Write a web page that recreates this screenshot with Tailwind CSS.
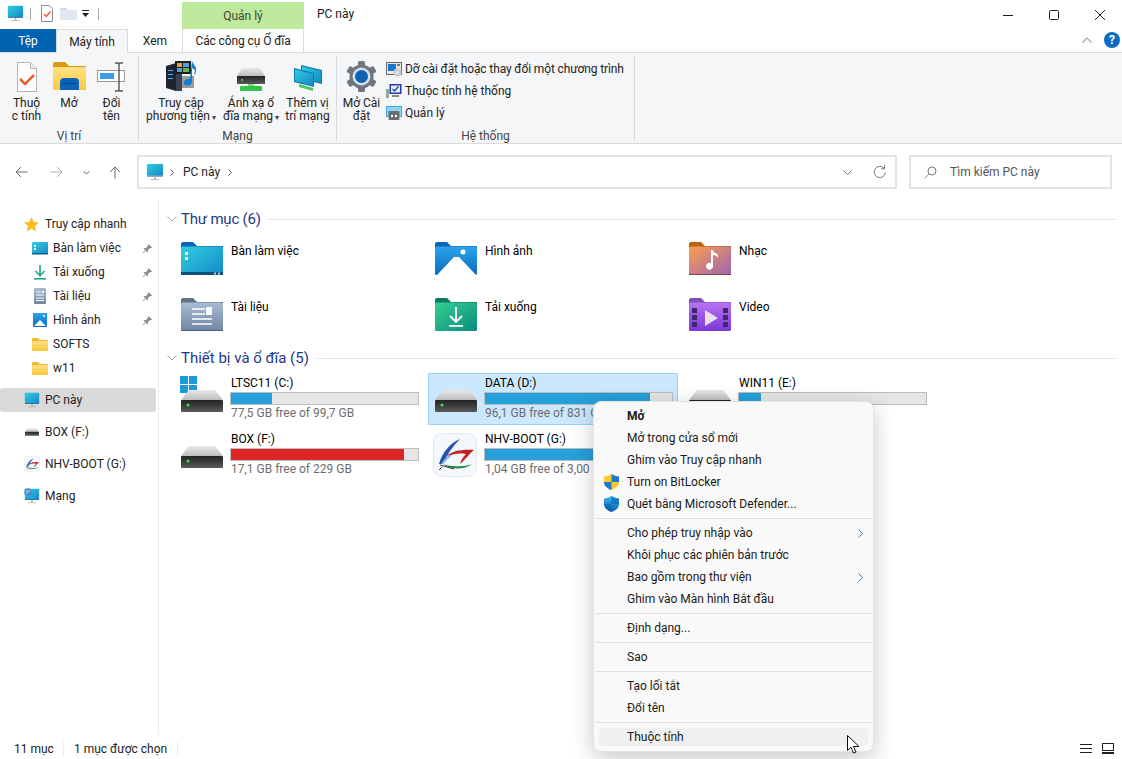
<!DOCTYPE html>
<html lang="vi">
  <head>
    <meta charset="UTF-8" />
    <title>PC này</title>
    <script src="https://cdn.jsdelivr.net/npm/@tailwindcss/browser@4"></script>
  </head>
  <body class="w-[1122px] h-[759px] overflow-hidden bg-white font-['Roboto','Noto_Sans',sans-serif] text-[12px] text-black">
    <!-- shared icons -->
    <svg class="absolute w-0 h-0 overflow-hidden" width="0" height="0">
      <defs>
        <linearGradient id="gDesk" x1="0" y1="0" x2="1" y2="1"><stop offset="0" stop-color="#2fd0df"/><stop offset="1" stop-color="#1488c6"/></linearGradient>
        <linearGradient id="gPic" x1="0" y1="0" x2="0" y2="1"><stop offset="0" stop-color="#2aa5ea"/><stop offset="1" stop-color="#0c6abd"/></linearGradient>
        <linearGradient id="gDoc" x1="0" y1="0" x2="0" y2="1"><stop offset="0" stop-color="#a9bcd3"/><stop offset="1" stop-color="#6f86a2"/></linearGradient>
        <linearGradient id="gDl" x1="0" y1="0" x2="1" y2="1"><stop offset="0" stop-color="#35d090"/><stop offset="1" stop-color="#0c8a80"/></linearGradient>
        <linearGradient id="gMusic" x1="0" y1="0" x2="1" y2="1"><stop offset="0" stop-color="#ff9d50"/><stop offset="1" stop-color="#9a65b2"/></linearGradient>
        <linearGradient id="gVideo" x1="0" y1="0" x2="0" y2="1"><stop offset="0" stop-color="#b873f2"/><stop offset="1" stop-color="#7a38d6"/></linearGradient>
        <linearGradient id="gDriveTop" x1="0" y1="0" x2="0" y2="1"><stop offset="0" stop-color="#e8e8e8"/><stop offset="1" stop-color="#bdbdbd"/></linearGradient>
        <linearGradient id="gDriveBody" x1="0" y1="0" x2="0" y2="1"><stop offset="0" stop-color="#232323"/><stop offset="1" stop-color="#5a5a5a"/></linearGradient>
        <linearGradient id="gYellow" x1="0" y1="0" x2="0" y2="1"><stop offset="0" stop-color="#ffe083"/><stop offset="1" stop-color="#fcc93f"/></linearGradient>
        <linearGradient id="gShield" x1="0" y1="0" x2="0" y2="1"><stop offset="0" stop-color="#35b4ee"/><stop offset="1" stop-color="#0a5fb4"/></linearGradient>

        <symbol id="monitor" viewBox="0 0 20 20">
          <rect x="1" y="1" width="18" height="13" rx="1" fill="url(#gDesk)"/>
          <rect x="1" y="14" width="18" height="1" fill="#0f5f8c"/>
          <rect x="9" y="15" width="2" height="3" fill="#a9b4bc"/>
          <rect x="5" y="18" width="10" height="1" fill="#a9b4bc"/>
        </symbol>
        <symbol id="drive" viewBox="0 0 42 22">
          <path d="M8 0h26l8 10H0z" fill="url(#gDriveTop)"/>
          <rect x="0" y="10" width="42" height="12" rx="1" fill="url(#gDriveBody)"/>
          <circle cx="7" cy="15" r="1.6" fill="#3fe04f"/>
        </symbol>
        <symbol id="nhv" viewBox="0 0 44 44">
          <rect x="0.5" y="0.5" width="43" height="43" rx="8" fill="#f3f8fc" stroke="#e4e8ec"/>
          <path d="M6 31C9 20 17 10 27 6c-6 6-13 15-17 25z" fill="#2a4fb0"/>
          <path d="M8 31C12 24 20 18 28 16c-7 4-13 9-18 15z" fill="#7ab3e8"/>
          <path d="M13 23c7-5 16-7 28-6-5 4-9 10-14 14 1-4 3-7 6-10-7-1-13 0-20 2z" fill="#c8201f"/>
          <path d="M10 31c8 3 22 3 29 0-7 6-22 6-29 0z" fill="#2b8f4a"/>
          <path d="M7 32l14 4M9 34l-3 3" stroke="#333" stroke-width="1" fill="none"/>
        </symbol>
        <symbol id="pin" viewBox="0 0 12 12">
          <path d="M7 1l4 4-1 .6-1.800.2L6.400 8l.1 1.600-.8.6L1.800 6.300l.6-.8L4 5.600 6.200 3.800l.2-1.800z" fill="#8b8b8b"/>
          <path d="M3.500 8.500L1 11" stroke="#8b8b8b" stroke-width="1"/>
        </symbol>
        <symbol id="folderY" viewBox="0 0 16 14">
          <path d="M0 2a1 1 0 011-1h5l2 2h7a1 1 0 011 1v9a1 1 0 01-1 1H1a1 1 0 01-1-1z" fill="#f5b72d"/>
          <rect x="0" y="4" width="16" height="10" rx="1" fill="url(#gYellow)"/>
        </symbol>
      </defs>
    </svg>

    <div class="flex flex-col h-full">
      <!-- title bar -->
      <div class="flex h-[29px] shrink-0">
        <div class="flex items-center w-[182px] pl-[7px] pb-[2px]">
          <svg class="w-[17px] h-[17px]"><use href="#monitor"/></svg>
          <div class="w-px h-[12px] bg-[#a8a8a8] ml-[6px]"></div>
          <svg class="w-[14px] h-[17px] ml-[9px]" viewBox="0 0 14 17">
            <path d="M1.500.500h8l3 3v13h-11z" fill="#fff" stroke="#8a8a8a"/>
            <path d="M4 9l2.300 2.400L10.500 6.500" fill="none" stroke="#e8602c" stroke-width="1.500"/>
          </svg>
          <svg class="w-[17px] h-[13px] ml-[6px]" viewBox="0 0 17 13">
            <path d="M0 1h6l2 2h9v10H0z" fill="#cfdbe8"/><rect y="3" width="17" height="10" fill="#dfe7f0"/>
          </svg>
          <svg class="w-[8px] h-[8px] ml-[5px]" viewBox="0 0 8 8">
            <rect y="0" width="7" height="1" fill="#222"/><path d="M0 3h7L3.500 7z" fill="#222"/>
          </svg>
          <div class="w-px h-[12px] bg-[#a8a8a8] ml-[8px]"></div>
        </div>
        <div class="w-[122px] mt-[2px] bg-[#bfe99c] flex items-center justify-center pt-[1px] text-[#3c4a36]">Quản lý</div>
        <div class="ml-[13px] pt-[5px] h-[29px] text-[#1a1a1a]">PC này</div>
        <div class="ml-auto flex h-full">
          <div class="w-[46px] flex items-center justify-center"><svg class="w-[10px] h-[10px]" viewBox="0 0 10 10"><rect y="5" width="10" height="1" fill="#222"/></svg></div>
          <div class="w-[46px] flex items-center justify-center"><svg class="w-[10px] h-[10px]" viewBox="0 0 10 10"><rect x=".5" y=".5" width="9" height="9" rx="1" fill="none" stroke="#222"/></svg></div>
          <div class="w-[45px] flex items-center justify-center"><svg class="w-[10px] h-[10px]" viewBox="0 0 10 10"><path d="M0 0l10 10M10 0L0 10" stroke="#222"/></svg></div>
        </div>
      </div>

      <!-- tabs -->
      <div class="flex h-[24px] shrink-0 border-b border-[#dadbdc] relative">
        <div class="w-[56px] h-[23px] bg-[#0063b1] text-white flex items-center justify-center">Tệp</div>
        <div class="w-[72px] h-[24px] bg-[#f5f6f7] border-x border-t border-[#dadbdc] flex items-center justify-center text-[#222]">Máy tính</div>
        <div class="w-[54px] flex items-center justify-center text-[#222]">Xem</div>
        <div class="w-[122px] border-x border-[#dadbdc] flex items-center justify-center text-[#222] tracking-[-0.1px]">Các công cụ Ổ đĩa</div>
        <div class="ml-auto flex items-center pr-[2px] pb-[2px]">
          <svg class="w-[10px] h-[6px] mr-[12px]" viewBox="0 0 10 6"><path d="M.5 5.500L5 1l4.500 4.500" fill="none" stroke="#a4a4a4" stroke-width="1.200"/></svg>
          <div class="w-[16px] h-[16px] rounded-full bg-[#0a6cc4] text-white font-bold text-[12px] leading-[16px] text-center">?</div>
        </div>
      </div>

      <!-- ribbon -->
      <div class="flex h-[91px] shrink-0 bg-[#f5f6f7] border-b border-[#dadbdc] text-[#222]">
        <!-- Vi tri -->
        <div class="w-[139px] my-[2px] border-r border-[#dadbdc] flex flex-col">
          <div class="flex flex-1 pl-[6px]">
            <div class="w-[41px] flex flex-col items-center">
              <svg class="w-[24px] h-[30px] mt-[7px]" viewBox="0 0 24 30">
                <path d="M2.500.500h13l6 6v23h-19z" fill="#fff" stroke="#b5b5b5"/>
                <path d="M15.500.500v6h6" fill="#eee" stroke="#b5b5b5"/>
                <path d="M5 17l5 5 9-9" fill="none" stroke="#e8602c" stroke-width="2.500"/>
              </svg>
              <div class="text-center leading-[13px] mt-[5px]">Thuộ<br />c tính</div>
            </div>
            <div class="w-[44px] flex flex-col items-center">
              <svg class="w-[33px] h-[28px] mt-[7px]" viewBox="0 0 33 28">
                <path d="M0 2a2 2 0 012-2h10l4 4h17v6H0z" fill="#d99a14"/>
                <rect y="5" width="33" height="23" fill="url(#gYellow)"/>
                <path d="M7 28v-8a4 4 0 014-4h11a4 4 0 014 4v8z" fill="#0b63b8"/>
                <rect x="10" y="21" width="13" height="1" fill="#073f78"/>
              </svg>
              <div class="text-center leading-[13px] mt-[7px]">Mở</div>
            </div>
            <div class="w-[41px] flex flex-col items-center">
              <svg class="w-[29px] h-[30px] mt-[7px]" viewBox="0 0 29 30">
                <rect x=".5" y="8.500" width="27" height="11" fill="#fff" stroke="#9a9a9a"/>
                <rect x="3" y="11" width="14" height="6" fill="#3a9be6"/>
                <path d="M18 1h3l1 1 1-1h3M22 2v26M18 29h3l1-1 1 1h3" fill="none" stroke="#555" stroke-width="1.400"/>
              </svg>
              <div class="text-center leading-[13px] mt-[5px]">Đổi<br />tên</div>
            </div>
          </div>
          <div class="h-[14px] leading-[18px] text-center text-[#444]">Vị trí</div>
        </div>
        <!-- Mang -->
        <div class="w-[198px] my-[2px] border-r border-[#dadbdc] flex flex-col">
          <div class="flex flex-1">
            <div class="w-[84px] flex flex-col items-center">
              <svg class="w-[32px] h-[32px] mt-[5px]" viewBox="0 0 32 32">
                <path d="M1 6l10-3v28l-10-3z" fill="#1d2530"/>
                <path d="M11 3l6 2v26h-6z" fill="#3a4350"/>
                <rect x="3" y="10" width="5" height="1" fill="#4ab2ff"/><rect x="3" y="14" width="5" height="1" fill="#4ab2ff"/><rect x="3" y="18" width="5" height="1" fill="#4ab2ff"/>
                <path d="M10 1h16v13H10z" fill="#1c1c1c"/>
                <rect x="12" y="3" width="5" height="4" fill="#e3a23a"/><rect x="18" y="3" width="6" height="4" fill="#4aa3df"/>
                <rect x="12" y="8" width="5" height="4" fill="#4aa3df"/><rect x="18" y="8" width="6" height="4" fill="#6cb24a"/>
                <path d="M17 16h12v12H17z" fill="#9a9a9a"/>
                <path d="M27 1c1 4 5 5 4 10-.5 3-1 3-2 4l1-5-3-2v14c0 3-6 5-8 2-1-3 2-5 5-5h1z" fill="#0d7fd6"/>
              </svg>
              <div class="text-center leading-[13px] mt-[5px]">Truy cập<br />phương tiện<span class="text-[8px] ml-[2px] text-[#444]">▾</span></div>
            </div>
            <div class="w-[56px] flex flex-col items-center">
              <svg class="w-[28px] h-[24px] mt-[13px]" viewBox="0 0 28 24">
                <path d="M5 0h18l5 8H0z" fill="url(#gDriveTop)"/>
                <rect y="8" width="28" height="8" fill="url(#gDriveBody)"/>
                <circle cx="5" cy="12" r="1" fill="#3fe04f"/>
                <rect x="3" y="18" width="22" height="5" rx="1" fill="#32c24a"/>
                <rect x="11" y="16" width="6" height="2" fill="#7adf7f"/>
              </svg>
              <div class="text-center leading-[13px] mt-[5px] whitespace-nowrap">Ánh xạ ổ<br />đĩa mạng<span class="text-[8px] ml-[2px] text-[#444]">▾</span></div>
            </div>
            <div class="w-[57px] flex flex-col items-center">
              <svg class="w-[28px] h-[27px] mt-[10px]" viewBox="0 0 28 27">
                <path d="M7 0l21 5v14L7 14z" fill="#1477b8"/>
                <path d="M8 1.500l19 4.500v11.500L8 13z" fill="url(#gDesk)"/>
                <path d="M0 3l20 5v14L0 17z" fill="#1477b8"/>
                <path d="M1 4.500l18 4.500v11.500L1 16z" fill="url(#gDesk)"/>
                <path d="M5 19l14 4v3l-14-4z" fill="#46c95a"/>
              </svg>
              <div class="text-center leading-[13px] mt-[5px] whitespace-nowrap">Thêm vị<br />trí mạng</div>
            </div>
          </div>
          <div class="h-[14px] leading-[18px] text-center text-[#444]">Mạng</div>
        </div>
        <!-- He thong -->
        <div class="w-[298px] my-[2px] border-r border-[#dadbdc] flex flex-col">
          <div class="flex flex-1">
            <div class="w-[49px] flex flex-col items-center">
              <svg class="w-[33px] h-[33px] mt-[5px]" viewBox="0 0 33 33">
                <g fill="#6f7680">
                  <circle cx="16.500" cy="16.500" r="12"/>
                  <rect x="13" y="1" width="7" height="31" rx="1.500"/>
                  <rect x="13" y="1" width="7" height="31" rx="1.500" transform="rotate(60 16.500 16.500)"/>
                  <rect x="13" y="1" width="7" height="31" rx="1.500" transform="rotate(120 16.500 16.500)"/>
                </g>
                <circle cx="16.500" cy="16.500" r="9" fill="#d7dfe8"/>
                <circle cx="16.500" cy="16.500" r="6.500" fill="#0d62b5"/>
              </svg>
              <div class="text-center leading-[13px] mt-[4px]">Mở Cài<br />đặt</div>
            </div>
            <div class="flex flex-col pt-[3px]">
              <div class="h-[22px] flex items-center">
                <svg class="w-[16px] h-[16px]" viewBox="0 0 16 16">
                  <rect x=".5" y="1.500" width="15" height="12" fill="#e8e8e8" stroke="#666"/>
                  <rect x="2" y="3" width="8" height="7" fill="#1a78c8"/>
                  <rect x="11" y="3" width="3" height="2" fill="#777"/>
                  <circle cx="11.500" cy="11.500" r="4" fill="#c9ccd0"/><circle cx="11.500" cy="11.500" r="1" fill="#fff"/>
                </svg>
                <span class="ml-[3px] whitespace-nowrap tracking-[-0.12px]">Dỡ cài đặt hoặc thay đổi một chương trình</span>
              </div>
              <div class="h-[22px] flex items-center">
                <svg class="w-[16px] h-[16px]" viewBox="0 0 16 16">
                  <rect x="0" y="6" width="3" height="9" fill="#8fae8f"/>
                  <rect x="3.500" y="1" width="12" height="10" fill="#1d3fae"/>
                  <rect x="5" y="2.500" width="9" height="7" fill="#e8f0ff"/>
                  <path d="M6.500 6l2 2 4-4.500" stroke="#1d3fae" stroke-width="1.300" fill="none"/>
                  <rect x="6" y="12" width="7" height="2" fill="#888"/>
                </svg>
                <span class="ml-[3px]">Thuộc tính hệ thống</span>
              </div>
              <div class="h-[22px] flex items-center">
                <svg class="w-[16px] h-[16px]" viewBox="0 0 16 16">
                  <rect y="1" width="16" height="11" fill="#3ba8e8"/>
                  <rect x="1" y="2" width="14" height="9" fill="#8fd3f5"/>
                  <rect x="2.500" y="6" width="11" height="9" rx="1" fill="#6a6f75"/>
                  <rect x="5" y="10" width="2" height="2" fill="#fff"/><rect x="9" y="10" width="2" height="2" fill="#fff"/>
                </svg>
                <span class="ml-[3px]">Quản lý</span>
              </div>
            </div>
          </div>
          <div class="h-[14px] leading-[18px] text-center text-[#444]">Hệ thống</div>
        </div>
      </div>

      <!-- address row -->
      <div class="flex items-center h-[56px] shrink-0 relative">
        <div class="w-[137px] flex items-center shrink-0 pl-[15px]">
          <svg class="w-[13px] h-[12px]" viewBox="0 0 13 12"><path d="M12.500 6H1M6 1L1 6l5 5" fill="none" stroke="#6e6e6e"/></svg>
          <svg class="w-[13px] h-[12px] ml-[22px]" viewBox="0 0 13 12"><path d="M.5 6H12M7 1l5 5-5 5" fill="none" stroke="#b0b0b0"/></svg>
          <svg class="w-[7px] h-[5px] ml-[20px]" viewBox="0 0 7 5"><path d="M.5 1l3 3 3-3" fill="none" stroke="#666"/></svg>
          <svg class="w-[12px] h-[13px] ml-[19px]" viewBox="0 0 12 13"><path d="M6 12.500V1M1 6l5-5 5 5" fill="none" stroke="#6e6e6e"/></svg>
        </div>
        <div class="w-[760px] h-[34px] shrink-0 border-2 border-[#e3e3e3] flex items-center pl-[7px]">
          <svg class="w-[18px] h-[18px]"><use href="#monitor"/></svg>
          <svg class="w-[4px] h-[7px] ml-[6px]" viewBox="0 0 4 7"><path d="M.5.5l3 3-3 3" fill="none" stroke="#555"/></svg>
          <span class="ml-[9px] text-[#222]">PC này</span>
          <svg class="w-[4px] h-[7px] ml-[8px]" viewBox="0 0 4 7"><path d="M.5.5l3 3-3 3" fill="none" stroke="#555"/></svg>
          <svg class="w-[9px] h-[5px] ml-auto" viewBox="0 0 9 5"><path d="M.5.5l4 4 4-4" fill="none" stroke="#777"/></svg>
          <svg class="w-[13px] h-[14px] ml-[21px] mr-[9px]" viewBox="0 0 13 14"><path d="M11 3.200A5.600 5.600 0 1012.400 7.500" fill="none" stroke="#777"/><path d="M11.500 0v3.800H8" fill="none" stroke="#777"/></svg>
        </div>
        <div class="w-[203px] h-[34px] ml-[12px] shrink-0 border-2 border-[#e3e3e3] flex items-center pl-[13px] text-[#555]">
          <svg class="w-[13px] h-[13px]" viewBox="0 0 13 13"><circle cx="8" cy="5" r="4" fill="none" stroke="#777"/><path d="M5 8l-4.500 4.500" stroke="#b77f9b"/></svg>
          <span class="ml-[13px]">Tìm kiếm PC này</span>
        </div>
      </div>

      <!-- main -->
      <div class="flex flex-1 min-h-0">
        <!-- nav pane -->
        <div class="w-[159px] shrink-0 border-r border-[#ececec] pt-[12px] text-[#222]">
          <div class="h-[24px] flex items-center pl-[24px]">
            <svg class="w-[15px] h-[15px]" viewBox="0 0 15 15"><path d="M7.500 0l2.200 4.900 5.300.6-4 3.600 1.100 5.300-4.600-2.700-4.600 2.700L4 9.100 0 5.500l5.300-.6z" fill="#fbbc1d"/></svg>
            <span class="ml-[6px]">Truy cập nhanh</span>
          </div>
          <div class="h-[24px] flex items-center pl-[32px] pr-[5px]">
            <svg class="w-[16px] h-[13px]" viewBox="0 0 16 13"><rect width="16" height="12" rx="1" fill="url(#gDesk)"/><rect y="11" width="16" height="1.500" fill="#0f5f8c"/><rect x="2" y="3" width="2" height="2" fill="#fff"/><rect x="2" y="6" width="2" height="2" fill="#fff"/></svg>
            <span class="ml-[5px]">Bàn làm việc</span>
            <svg class="w-[11px] h-[11px] ml-auto"><use href="#pin"/></svg>
          </div>
          <div class="h-[24px] flex items-center pl-[32px] pr-[5px]">
            <svg class="w-[16px] h-[16px]" viewBox="0 0 16 16"><path d="M8 1v10M3.500 7L8 11.500 12.500 7" fill="none" stroke="#17a884" stroke-width="1.600"/><rect x="2" y="14" width="12" height="1.600" fill="#17a884"/></svg>
            <span class="ml-[5px]">Tải xuống</span>
            <svg class="w-[11px] h-[11px] ml-auto"><use href="#pin"/></svg>
          </div>
          <div class="h-[24px] flex items-center pl-[34px] pr-[5px]">
            <svg class="w-[12px] h-[16px]" viewBox="0 0 12 16"><rect width="12" height="16" rx="1" fill="url(#gDoc)"/><path d="M2 4h5M2 7h8M2 10h8M2 12.500h8" stroke="#fff"/><rect x="8" y="3" width="2" height="2" fill="#fff"/></svg>
            <span class="ml-[7px]">Tài liệu</span>
            <svg class="w-[11px] h-[11px] ml-auto"><use href="#pin"/></svg>
          </div>
          <div class="h-[24px] flex items-center pl-[33px] pr-[5px]">
            <svg class="w-[14px] h-[14px]" viewBox="0 0 14 14"><rect width="14" height="14" fill="url(#gPic)"/><path d="M1 13l6-6 6 6z" fill="#fff"/><circle cx="11" cy="3" r="1" fill="#fff"/></svg>
            <span class="ml-[6px]">Hình ảnh</span>
            <svg class="w-[11px] h-[11px] ml-auto"><use href="#pin"/></svg>
          </div>
          <div class="h-[24px] flex items-center pl-[32px]">
            <svg class="w-[16px] h-[14px]"><use href="#folderY"/></svg>
            <span class="ml-[5px]">SOFTS</span>
          </div>
          <div class="h-[24px] flex items-center pl-[32px]">
            <svg class="w-[16px] h-[14px]"><use href="#folderY"/></svg>
            <span class="ml-[5px]">w11</span>
          </div>
          <div class="h-[24px] mt-[8px] mr-[2px] flex items-center pl-[24px] bg-[#d9d9d9] rounded-[3px]">
            <svg class="w-[16px] h-[16px]"><use href="#monitor"/></svg>
            <span class="ml-[5px]">PC này</span>
          </div>
          <div class="h-[24px] mt-[8px] flex items-center pl-[25px]">
            <svg class="w-[14px] h-[8px]"><use href="#drive"/></svg>
            <span class="ml-[6px]">BOX (F:)</span>
          </div>
          <div class="h-[24px] mt-[8px] flex items-center pl-[24px]">
            <svg class="w-[16px] h-[16px]"><use href="#nhv"/></svg>
            <span class="ml-[5px]">NHV-BOOT (G:)</span>
          </div>
          <div class="h-[24px] mt-[8px] flex items-center pl-[24px]">
            <svg class="w-[16px] h-[16px]" viewBox="0 0 16 16"><use href="#monitor"/><circle cx="4" cy="4" r="3.800" fill="#4f8fc8"/><path d="M1.500 4c1-2 3-3 5-1-1 1-3 1-3 3z" fill="#8fc0e8"/></svg>
            <span class="ml-[5px]">Mạng</span>
          </div>
        </div>

        <!-- content -->
        <div class="flex-1 pl-[15px] pr-[6px] pt-[9px]">
          <div class="flex items-center h-[20px]">
            <svg class="w-[10px] h-[6px] mr-[4px] -ml-[7px] shrink-0" viewBox="0 0 10 6"><path d="M.5.500L5 5l4.500-4.500" fill="none" stroke="#a8a8a8"/></svg>
            <span class="text-[15px] text-[#1e3a87] whitespace-nowrap tracking-[-0.2px]">Thư mục (6)</span>
            <div class="flex-1 h-px bg-[#e3e3e3] ml-[7px]"></div>
          </div>
          <div class="grid grid-cols-[254px_254px_254px] auto-rows-[52px] gap-y-[4px] mt-[6px]">
            <div class="flex pl-[7px] pt-[7px]">
              <svg class="w-[42px] h-[33px]" viewBox="0 0 42 33"><path d="M0 2a2 2 0 012-2h10l4 4h26v8H0z" fill="#0d64c0"/><rect y="4.500" width="42" height="28.500" rx="1.500" fill="url(#gDesk)"/><rect y="30" width="42" height="3" fill="#0e4f7c"/><rect x="4" y="10" width="3" height="3" fill="#fff"/><rect x="4" y="15" width="3" height="3" fill="#fff"/><rect x="33" y="30.500" width="2" height="2" fill="#bcd"/><rect x="37" y="30.500" width="2" height="2" fill="#bcd"/></svg>
              <span class="ml-[8px]">Bàn làm việc</span>
            </div>
            <div class="flex pl-[7px] pt-[7px]">
              <svg class="w-[42px] h-[33px]" viewBox="0 0 42 33"><path d="M0 2a2 2 0 012-2h10l4 4h26v8H0z" fill="#0d64c0"/><rect y="4.500" width="42" height="28.500" rx="1.500" fill="url(#gPic)"/><path d="M2 33L19 15l5 0 17 18z" fill="#fff"/><circle cx="28" cy="10" r="2.500" fill="#fff"/></svg>
              <span class="ml-[8px]">Hình ảnh</span>
            </div>
            <div class="flex pl-[7px] pt-[7px]">
              <svg class="w-[42px] h-[33px]" viewBox="0 0 42 33"><path d="M0 2a2 2 0 012-2h10l4 4h26v8H0z" fill="#b9620d"/><rect y="4.500" width="42" height="28.500" rx="1.500" fill="url(#gMusic)"/><rect y="32" width="42" height="1" fill="#7a4a4a"/><path d="M22 8h2c0 3 5 3 5 6v2c-1-2-3-3-5-3v11a3.500 3.500 0 11-2-3z" fill="#fff"/></svg>
              <span class="ml-[8px]">Nhạc</span>
            </div>
            <div class="flex pl-[7px] pt-[7px]">
              <svg class="w-[42px] h-[33px]" viewBox="0 0 42 33"><path d="M0 2a2 2 0 012-2h10l4 4h26v8H0z" fill="#5f7486"/><rect y="4.500" width="42" height="28.500" rx="1.500" fill="url(#gDoc)"/><rect y="32" width="42" height="1" fill="#50647c"/><path d="M11 11h13M11 16h13M11 21h20M11 26h20" stroke="#fff" stroke-width="1.600"/><rect x="25" y="9" width="6" height="8" rx="1" fill="#fff"/></svg>
              <span class="ml-[8px]">Tài liệu</span>
            </div>
            <div class="flex pl-[7px] pt-[7px]">
              <svg class="w-[42px] h-[33px]" viewBox="0 0 42 33"><path d="M0 2a2 2 0 012-2h10l4 4h26v8H0z" fill="#0b7a62"/><rect y="4.500" width="42" height="28.500" rx="1.500" fill="url(#gDl)"/><path d="M21 9v15M15 18l6 6 6-6" fill="none" stroke="#fff" stroke-width="1.800"/><rect x="14" y="27" width="14" height="1.800" fill="#fff"/></svg>
              <span class="ml-[8px]">Tải xuống</span>
            </div>
            <div class="flex pl-[7px] pt-[7px]">
              <svg class="w-[42px] h-[33px]" viewBox="0 0 42 33"><path d="M0 2a2 2 0 012-2h10l4 4h26v8H0z" fill="#7c52b8"/><rect y="4.500" width="42" height="28.500" rx="1.500" fill="url(#gVideo)"/><g fill="#43256f"><rect x="3" y="10" width="5" height="5"/><rect x="3" y="17" width="5" height="5"/><rect x="3" y="24" width="5" height="5"/><rect x="34" y="10" width="5" height="5"/><rect x="34" y="17" width="5" height="5"/><rect x="34" y="24" width="5" height="5"/></g><path d="M16 12l13 8-13 8z" fill="#e8e0f0"/></svg>
              <span class="ml-[8px]">Video</span>
            </div>
          </div>

          <div class="flex items-center h-[20px] mt-[5px]">
            <svg class="w-[10px] h-[6px] mr-[4px] -ml-[7px] shrink-0" viewBox="0 0 10 6"><path d="M.5.500L5 5l4.500-4.500" fill="none" stroke="#a8a8a8"/></svg>
            <span class="text-[15px] text-[#1e3a87] whitespace-nowrap">Thiết bị và ổ đĩa (5)</span>
            <div class="flex-1 h-px bg-[#e3e3e3] ml-[7px]"></div>
          </div>
          <div class="grid grid-cols-[254px_254px_254px] auto-rows-[52px] gap-y-[4px] mt-[5px]">
            <div class="w-[250px] flex pl-[6px] border border-transparent">
              <div class="w-[42px] shrink-0 relative">
                <svg class="absolute left-[-1px] top-[2px] w-[17px] h-[17px]" viewBox="0 0 17 17"><g fill="#1a9ad8"><rect width="8" height="8"/><rect x="9" width="8" height="8"/><rect y="9" width="8" height="8"/><rect x="9" y="9" width="8" height="8"/></g></svg>
                <svg class="absolute left-0 top-[16px] w-[42px] h-[22px]"><use href="#drive"/></svg>
              </div>
              <div class="ml-[7px] w-[189px]">
                <div class="h-[17px] pl-[1px]">LTSC11 (C:)</div>
                <div class="h-[13px] mt-[1px] bg-[#e6e6e6] border border-[#bcbcbc]"><div class="h-full bg-[#26a0da]" style="width:22%"></div></div>
                <div class="pl-[1px] -mt-[1px] text-[#6d6d6d]">77,5 GB free of 99,7 GB</div>
              </div>
            </div>
            <div class="w-[250px] flex pl-[6px] border border-[#99d1ff] bg-[#cce8ff] rounded-[1px]">
              <div class="w-[42px] shrink-0 relative">
                <svg class="absolute left-0 top-[16px] w-[42px] h-[22px]"><use href="#drive"/></svg>
              </div>
              <div class="ml-[7px] w-[189px]">
                <div class="h-[17px] pl-[1px]">DATA (D:)</div>
                <div class="h-[13px] mt-[1px] bg-[#e6e6e6] border border-[#bcbcbc]"><div class="h-full bg-[#26a0da]" style="width:88%"></div></div>
                <div class="pl-[1px] -mt-[1px] text-[#6d6d6d] whitespace-nowrap">96,1 GB free of 831 GB</div>
              </div>
            </div>
            <div class="w-[250px] flex pl-[6px] border border-transparent">
              <div class="w-[42px] shrink-0 relative">
                <svg class="absolute left-0 top-[16px] w-[42px] h-[22px]"><use href="#drive"/></svg>
              </div>
              <div class="ml-[7px] w-[189px]">
                <div class="h-[17px] pl-[1px]">WIN11 (E:)</div>
                <div class="h-[13px] mt-[1px] bg-[#e6e6e6] border border-[#bcbcbc]"><div class="h-full bg-[#26a0da]" style="width:12%"></div></div>
              </div>
            </div>
            <div class="w-[250px] flex pl-[6px] border border-transparent">
              <div class="w-[42px] shrink-0 relative">
                <svg class="absolute left-0 top-[16px] w-[42px] h-[22px]"><use href="#drive"/></svg>
              </div>
              <div class="ml-[7px] w-[189px]">
                <div class="h-[17px] pl-[1px]">BOX (F:)</div>
                <div class="h-[13px] mt-[1px] bg-[#e6e6e6] border border-[#bcbcbc]"><div class="h-full bg-[#da2626]" style="width:92.5%"></div></div>
                <div class="pl-[1px] -mt-[1px] text-[#6d6d6d]">17,1 GB free of 229 GB</div>
              </div>
            </div>
            <div class="w-[250px] flex pl-[6px] border border-transparent">
              <div class="w-[44px] shrink-0 -ml-[2px] pt-[3px]">
                <svg class="w-[44px] h-[44px]"><use href="#nhv"/></svg>
              </div>
              <div class="ml-[7px] w-[189px]">
                <div class="h-[17px] pl-[1px]">NHV-BOOT (G:)</div>
                <div class="h-[13px] mt-[1px] bg-[#e6e6e6] border border-[#bcbcbc]"><div class="h-full bg-[#26a0da]" style="width:66%"></div></div>
                <div class="pl-[1px] -mt-[1px] text-[#6d6d6d] whitespace-nowrap">1,04 GB free of 3,00 GB</div>
              </div>
            </div>
          </div>
        </div>
      </div>

      <!-- status bar -->
      <div class="h-[24px] shrink-0 flex items-center text-[#222] pt-[3px]">
        <span class="ml-[14px] w-[49px]">11 mục</span>
        <div class="w-px h-[14px] bg-[#ececec]"></div>
        <span class="ml-[10px] w-[103px]">1 mục được chọn</span>
        <div class="w-px h-[14px] bg-[#ececec]"></div>
        <svg class="w-[12px] h-[11px] ml-auto" viewBox="0 0 12 11"><path d="M0 1.500h12M0 5.500h12M0 9.500h12" stroke="#222"/></svg>
        <svg class="w-[12px] h-[11px] ml-[10px] mr-[8px]" viewBox="0 0 12 11"><rect x=".5" y=".5" width="11" height="7" fill="none" stroke="#222"/><rect y="9" width="12" height="2" fill="#222"/></svg>
      </div>
    </div>

    <!-- context menu -->
    <div class="absolute left-[593px] top-[401px] w-[281px] h-[351px] bg-[#f9f9f9] border border-[#e4e4e4] rounded-[8px] shadow-[0_6px_22px_rgba(0,0,0,0.22)] py-[3px] text-[#1a1a1a]">
      <div class="h-[22px] pl-[33px] flex items-center font-bold">Mở</div>
      <div class="h-[22px] pl-[33px] flex items-center">Mở trong cửa sổ mới</div>
      <div class="h-[22px] pl-[33px] flex items-center">Ghim vào Truy cập nhanh</div>
      <div class="h-[22px] pl-[10px] flex items-center">
        <svg class="w-[15px] h-[16px]" viewBox="0 0 15 16"><path d="M7.500 0C10 1.600 12 2.300 15 2.500V8c0 4-3.500 6.500-7.500 8C3.500 14.500 0 12 0 8V2.500C3 2.300 5 1.600 7.500 0z" fill="#ffc928"/><path d="M7.500 0C10 1.600 12 2.300 15 2.500V8H7.500zM7.500 8v8C3.500 14.500 0 12 0 8z" fill="#1a78d6"/></svg>
        <span class="ml-[8px]">Turn on BitLocker</span>
      </div>
      <div class="h-[22px] pl-[10px] flex items-center">
        <svg class="w-[15px] h-[16px]" viewBox="0 0 15 16"><path d="M7.500 0C10 1.600 12 2.300 15 2.500V8c0 4-3.500 6.500-7.500 8C3.500 14.500 0 12 0 8V2.500C3 2.300 5 1.600 7.500 0z" fill="url(#gShield)"/><path d="M7.500 0C10 1.600 12 2.300 15 2.500V8H7.500zM7.500 8v8C3.500 14.500 0 12 0 8z" fill="#0a5fb4" fill-opacity=".55"/></svg>
        <span class="ml-[8px]">Quét bằng Microsoft Defender...</span>
      </div>
      <div class="h-px bg-[#e2e2e2] my-[3px] mx-[1px]"></div>
      <div class="h-[22px] pl-[33px] pr-[10px] flex items-center justify-between">Cho phép truy nhập vào
        <svg class="w-[5px] h-[9px]" viewBox="0 0 5 9"><path d="M.5.500l4 4-4 4" fill="none" stroke="#3f7fb5"/></svg>
      </div>
      <div class="h-[22px] pl-[33px] flex items-center">Khôi phục các phiên bản trước</div>
      <div class="h-[22px] pl-[33px] pr-[10px] flex items-center justify-between">Bao gồm trong thư viện
        <svg class="w-[5px] h-[9px]" viewBox="0 0 5 9"><path d="M.5.500l4 4-4 4" fill="none" stroke="#3f7fb5"/></svg>
      </div>
      <div class="h-[22px] pl-[33px] flex items-center">Ghim vào Màn hình Bắt đầu</div>
      <div class="h-px bg-[#e2e2e2] my-[3px] mx-[1px]"></div>
      <div class="h-[22px] pl-[33px] flex items-center">Định dạng...</div>
      <div class="h-px bg-[#e2e2e2] my-[3px] mx-[1px]"></div>
      <div class="h-[22px] pl-[33px] flex items-center">Sao</div>
      <div class="h-px bg-[#e2e2e2] my-[3px] mx-[1px]"></div>
      <div class="h-[22px] pl-[33px] flex items-center">Tạo lối tắt</div>
      <div class="h-[22px] pl-[33px] flex items-center">Đổi tên</div>
      <div class="h-px bg-[#e2e2e2] my-[3px] mx-[1px]"></div>
      <div class="h-[22px] px-[5px] py-[2px]">
        <div class="h-full pl-[28px] flex items-center bg-[#f0f0f0] rounded-[4px]">Thuộc tính</div>
      </div>
    </div>

    <!-- mouse cursor -->
    <svg class="absolute left-[847px] top-[735px] w-[13px] h-[19px]" viewBox="0 0 13 19"><path d="M.5.500v15l3.500-3.300 2.500 5.800 2.500-1-2.500-5.500H12z" fill="#fff" stroke="#111"/></svg>
  </body>
</html>
